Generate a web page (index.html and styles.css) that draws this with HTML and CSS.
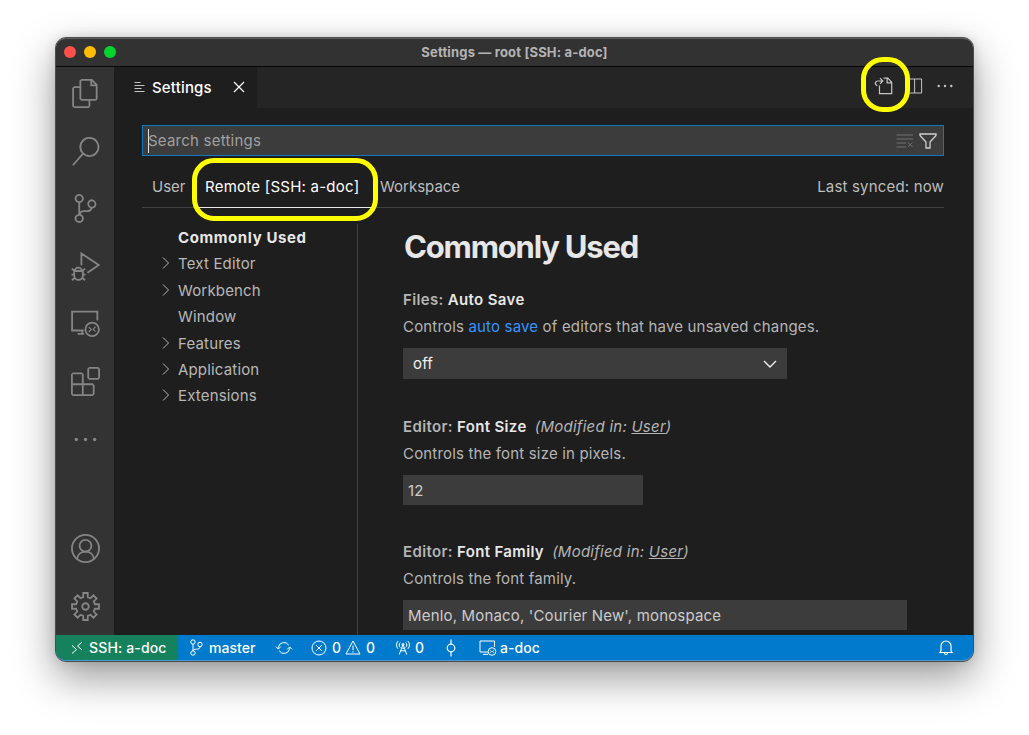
FILE: index.html
```
<!DOCTYPE html>
<html lang="en">
<head>
    <meta charset="UTF-8">
    <meta name="viewport" content="width=device-width, initial-scale=1.0">
    <title>Settings — root [SSH: a-doc]</title>
    <link rel="stylesheet" href="styles.css">
</head>
<body>
    <div class="window">
        <!-- Title bar -->
        <header class="titlebar">
            <div class="lights">
                <span class="light red"></span>
                <span class="light yellow"></span>
                <span class="light green"></span>
            </div>
            <span class="window-title">Settings — root [SSH: a-doc]</span>
        </header>

        <div class="main">
            <!-- Activity bar -->
            <nav class="activity">
                <svg viewBox="0 0 24 24" class="filled"><path d="M17.5 0h-9L7 1.5V6H2.5L1 7.5v15.07L2.5 24h12.07L16 22.57V18h4.7l1.3-1.43V4.5L17.5 0zm0 2.12l2.38 2.38H17.5V2.12zm-3 20.38h-12v-15H7v9.07L8.5 18h6v4.5zm6-6h-12v-15H16V6h4.5v10.5z"/></svg>
                <svg viewBox="0 0 24 24" class="filled"><path d="M15.25 0a8.25 8.25 0 0 0-6.18 13.72L1 22.88l1.12 1 8.05-9.12A8.251 8.251 0 1 0 15.25.01V0zm0 15a6.75 6.75 0 1 1 0-13.5 6.75 6.75 0 0 1 0 13.5z"/></svg>
                <svg viewBox="0 0 24 24" class="filled"><path d="M21.007 8.222A3.738 3.738 0 0 0 15.045 5.2a3.737 3.737 0 0 0 1.156 6.583 2.988 2.988 0 0 1-2.668 1.67h-2.99a4.456 4.456 0 0 0-2.989 1.165V7.4a3.737 3.737 0 1 0-1.494 0v9.117a3.776 3.776 0 1 0 1.816.099 2.99 2.99 0 0 1 2.668-1.667h2.99a4.484 4.484 0 0 0 4.223-3.039 3.736 3.736 0 0 0 3.25-3.687zM4.565 3.738a2.242 2.242 0 1 1 4.484 0 2.242 2.242 0 0 1-4.484 0zm4.484 16.441a2.242 2.242 0 1 1-4.484 0 2.242 2.242 0 0 1 4.484 0zm8.221-9.715a2.242 2.242 0 1 1 0-4.485 2.242 2.242 0 0 1 0 4.485z"/></svg>
                <svg viewBox="0 0 24 24"><path d="M8.6 11V1.2L23 10.8l-9.400 6.300M3.200 15.800a2.900 2.900 0 0 1 5.800 0M2.600 15.700h7.200v3.500a3.600 3.900 0 0 1-7.200 0zM.4 18.700h2.200M9.800 18.700H12M.8 13.700l2 2M11.600 13.700l-2 2M.8 23.400l2.200-2.100M11.600 23.400l-2.200-2.100"/></svg>
                <svg viewBox="0 0 24 24"><path d="M21.800 9.500V2.200H.9v15.600h9.600M5.500 20.600h5.400M9.300 17.800v2.800"/><circle cx="17.500" cy="16.900" r="5.600"/><path class="thin" d="M14.700 15l2 2-2 2M20.300 14.700l-2 2 2 2"/></svg>
                <svg viewBox="0 0 24 24" class="filled"><path d="M13.500 1.500L15 0h7.500L24 1.500V9l-1.500 1.500H15L13.500 9V1.500zm1.500 0V9h7.500V1.500H15zM0 15V6l1.500-1.500H9L10.500 6v7.500H18l1.500 1.500v7.500L18 24H1.500L0 22.500V15zm9-1.500V6H1.500v7.500H9zM9 15H1.500v7.500H9V15zm1.500 7.500H18V15h-7.500v7.500z"/></svg>
                <svg viewBox="0 0 24 24" class="filled"><circle cx="4.400" cy="12" r="1.400"/><circle cx="12" cy="12" r="1.400"/><circle cx="19.600" cy="12" r="1.400"/></svg>
                <svg viewBox="0 0 24 24" class="push"><circle cx="12" cy="12" r="11.200"/><circle cx="12" cy="9.700" r="4.900"/><path d="M5 20.500c.5-3.300 3-5.900 7-5.900s6.500 2.600 7 5.900"/></svg>
                <svg viewBox="-12 -12 24 24"><path d="M7.780-1.870 11.150-1.870 11.150 1.870 7.780 1.870 6.820 4.180 9.210 6.560 6.560 9.210 4.180 6.820 1.870 7.780 1.870 11.150-1.870 11.150-1.870 7.780-4.180 6.820-6.560 9.210-9.210 6.560-6.820 4.180-7.780 1.870-11.150 1.870-11.150-1.870-7.780-1.870-6.820-4.180-9.210-6.560-6.560-9.210-4.180-6.820-1.870-7.780-1.870-11.150 1.870-11.150 1.870-7.780 4.180-6.820 6.560-9.210 9.210-6.560 6.820-4.180Z"/><circle r="2.700"/></svg>
            </nav>

            <div class="editor">
                <!-- Tabs -->
                <div class="tabs">
                    <div class="tab">
                        <svg class="tab-icon" viewBox="0 0 12 12"><path d="M.5 1.500h6M.5 4.500h10M.5 7.500h7M.5 10.500h10"/></svg>
                        <span class="tab-name">Settings</span>
                        <svg class="tab-close" viewBox="0 0 12 12"><path d="M1 1l10 10M11 1L1 11"/></svg>
                    </div>
                    <div class="actions">
                        <div class="open-json">
                            <svg viewBox="0 0 20 20"><path d="M5.500 9.500v8.200h12.200V6.300L13.800 2.200H9.500M13.100 2.200v4.700h4.600M3.400 9.600C.2 8.300 1 5 4 5h4.400M6 2.200L8.800 5 6 7.800"/></svg>
                            <span class="mark mark-icon"></span>
                        </div>
                        <svg class="split" viewBox="0 0 16 16"><path d="M.6 1h14v14H.6zM7.600 1v14"/></svg>
                        <svg class="more" viewBox="0 0 16 4"><circle cx="1.700" cy="2" r="1.200"/><circle cx="8" cy="2" r="1.200"/><circle cx="14.300" cy="2" r="1.200"/></svg>
                    </div>
                </div>

                <div class="settings">
                    <!-- Search -->
                    <div class="search">
                        <span class="caret"></span>
                        <span class="placeholder">Search settings</span>
                        <svg class="clear" viewBox="0 0 18 14"><path d="M.5 1H17M.5 5H17M.5 9h9.500M.5 13h9.500M12 8.500l4.500 4.500M16.500 8.500L12 13"/></svg>
                        <svg class="filter" viewBox="0 0 18 16"><path d="M1 1h16v1.500L11 9v6H7V9L1 2.500z"/></svg>
                    </div>

                    <!-- Scopes -->
                    <div class="scopes">
                        <span class="scope user">User</span>
                        <span class="scope remote">Remote [SSH: a-doc]<span class="mark mark-scope"></span></span>
                        <span class="scope workspace">Workspace</span>
                        <span class="synced">Last synced: now</span>
                    </div>

                    <div class="body">
                        <!-- Table of contents -->
                        <ul class="toc">
                            <li class="selected">Commonly Used</li>
                            <li><svg viewBox="0 0 8 14"><path d="M1 1.500l5.500 5.500L1 12.500"/></svg>Text Editor</li>
                            <li><svg viewBox="0 0 8 14"><path d="M1 1.500l5.500 5.500L1 12.500"/></svg>Workbench</li>
                            <li>Window</li>
                            <li><svg viewBox="0 0 8 14"><path d="M1 1.500l5.500 5.500L1 12.500"/></svg>Features</li>
                            <li><svg viewBox="0 0 8 14"><path d="M1 1.500l5.500 5.500L1 12.500"/></svg>Application</li>
                            <li><svg viewBox="0 0 8 14"><path d="M1 1.500l5.500 5.500L1 12.500"/></svg>Extensions</li>
                        </ul>

                        <div class="list">
                            <h1>Commonly Used</h1>
                            <section class="setting">
                                <h2><span class="category">Files:</span> Auto Save</h2>
                                <p>Controls <a href="#">auto save</a> of editors that have unsaved changes.</p>
                                <div class="field select">off
                                    <svg viewBox="0 0 14 8"><path d="M1 1l6 6 6-6"/></svg>
                                </div>
                            </section>
                            <section class="setting">
                                <h2><span class="category">Editor:</span> Font Size <em>(Modified in: <u>User</u>)</em></h2>
                                <p>Controls the font size in pixels.</p>
                                <div class="field number">12</div>
                            </section>
                            <section class="setting">
                                <h2><span class="category">Editor:</span> Font Family <em>(Modified in: <u>User</u>)</em></h2>
                                <p>Controls the font family.</p>
                                <div class="field text">Menlo, Monaco, 'Courier New', monospace</div>
                            </section>
                        </div>
                    </div>
                </div>
            </div>
        </div>

        <!-- Status bar -->
        <footer class="status">
            <div class="item host">
                <svg class="i-remote" viewBox="0 0 12 14"><path d="M1 4.500l4.500 4L1 12.500M11 1L6.500 5 11 9"/></svg>
                <span>SSH: a-doc</span>
            </div>
            <div class="item branch">
                <svg class="i-branch" viewBox="0 0 13 17"><circle cx="3" cy="3" r="2.200"/><circle cx="3" cy="14" r="2.200"/><circle cx="10" cy="5.500" r="2.200"/><path d="M3 5.200v6.600M10 7.700c0 2-1.500 2.500-3.500 2.500-2 0-3.500.4-3.500 1.800"/></svg>
                <span>master</span>
            </div>
            <div class="item sync">
                <svg class="i-sync" viewBox="0 0 18 14"><path d="M3.300 7.500V6.600a5.700 5.700 0 0 1 10.500-2.400M14.700 6.500v.9a5.700 5.700 0 0 1-10.500 2.400M.8 5.600l2.500 2.500 2.500-2.500M12.200 8.400l2.500-2.500 2.500 2.500"/></svg>
            </div>
            <div class="item problems">
                <svg class="i-error" viewBox="0 0 16 16"><circle cx="8" cy="8" r="7"/><path d="M5.200 5.200l5.600 5.600M10.800 5.200l-5.600 5.600"/></svg>
                <span>0</span>
                <svg class="i-warning" viewBox="0 0 16 15"><path d="M8 1L15 14H1zM8 5.500v4.700M8 11.300v1.300"/></svg>
                <span>0</span>
            </div>
            <div class="item ports">
                <svg class="i-tower" viewBox="0 0 14 15"><path d="M3.200 14.500L7 4.500l3.800 10M4.700 10.800h4.600M5.700 8.200h2.600M4.300 7.500a3.300 3.300 0 0 1 0-5M9.700 7.500a3.300 3.300 0 0 0 0-5M2.100 8.800a5.500 5.500 0 0 1 0-7.700M11.900 8.800a5.500 5.500 0 0 0 0-7.700"/><circle cx="7" cy="4.500" r="1"/></svg>
                <span>0</span>
            </div>
            <div class="item commit">
                <svg class="i-commit" viewBox="0 0 10 18"><circle cx="5" cy="9" r="3.800"/><path d="M5 .5v4.700M5 12.800v4.700"/></svg>
            </div>
            <div class="item context">
                <svg class="i-screen" viewBox="0 0 18 16"><path d="M15.500 7V1H1v11h8M4 14.300h5"/><circle cx="13" cy="11.500" r="3.800"/><path d="M11.300 10.300l1.200 1.200-1.200 1.200M14.700 10.300l-1.200 1.200 1.200 1.200"/></svg>
                <span>a-doc</span>
            </div>
            <div class="item bell">
                <svg class="i-bell" viewBox="0 0 14 16"><path d="M1 12.500h12l-1-2V6a5 5 0 0 0-10 0v4.500zM5.500 13a1.500 1.500 0 0 0 3 0"/></svg>
            </div>
        </footer>
    </div>
</body>
</html>
```
FILE: styles.css
```
* {
    box-sizing: border-box;
}

body {
    margin: 0;
    height: 735px;
    padding: 37px 55px 0;
    overflow: hidden;
    background: #fff;
    font-family: Inter, "Liberation Sans", sans-serif;
    font-size: 15px;
    letter-spacing: 0.17px;
    color: #cccccc;
}

svg {
    display: block;
    flex: none;
    fill: none;
    stroke: currentColor;
}

/* Window */
.window {
    width: 919px;
    height: 625px;
    border: 1px solid #4c4c4c;
    border-radius: 11px;
    display: flex;
    flex-direction: column;
    background: #1e1e1e;
    background-clip: padding-box;
    box-shadow: 0 16px 42px rgba(0, 0, 0, 0.4), 0 0 12px rgba(0, 0, 0, 0.12);
}

.titlebar {
    height: 29px;
    display: grid;
    grid-template-columns: 1fr auto 1fr;
    align-items: center;
    padding: 0 8px 2px;
    background: #323232;
    border-top: 1px solid #5c5c5c;
    border-bottom: 1px solid #060606;
    border-radius: 10px 10px 0 0;
}

.lights {
    display: flex;
    gap: 8px;
}

.light {
    width: 12px;
    height: 12px;
    border-radius: 50%;
}

.red {
    background: #ff5149;
}

.yellow {
    background: #ffbd05;
}

.green {
    background: #06d32d;
}

.window-title {
    font-size: 13px;
    font-weight: 700;
    color: #b4b4b4;
}

.main {
    flex: 1;
    min-height: 0;
    display: flex;
}

/* Activity bar */
.activity {
    width: 58px;
    padding: 12px 0 14px;
    display: flex;
    flex-direction: column;
    align-items: center;
    gap: 28.600px;
    background: #333333;
    color: #858585;
}

.activity svg {
    width: 29px;
    height: 29px;
    stroke-width: 1.500;
}

.activity .filled {
    fill: currentColor;
    stroke: none;
}

.activity .thin {
    stroke-width: 1;
}

.activity .push {
    margin-top: auto;
}

/* Tabs */
.editor {
    flex: 1;
    min-width: 0;
    display: flex;
    flex-direction: column;
}

.tabs {
    height: 41px;
    display: flex;
    justify-content: space-between;
    background: #252526;
}

.tab {
    width: 143px;
    padding-left: 20px;
    display: flex;
    align-items: center;
    background: #1e1e1e;
    color: #fff;
}

.tab-icon {
    width: 12px;
    height: 12px;
    margin-bottom: 2px;
    color: #c5c5c5;
}

.tab-name {
    width: 81px;
    margin-left: 6px;
    font-weight: 500;
}

.tab-close {
    width: 12px;
    height: 12px;
    margin-bottom: 2px;
    stroke-width: 1.200;
}

.actions {
    display: flex;
    align-items: center;
    padding: 0 20px 3px 0;
    color: #c5c5c5;
}

.open-json {
    position: relative;
    margin-right: 13px;
}

.open-json svg {
    width: 20px;
    height: 20px;
    stroke-width: 1.200;
}

.split {
    width: 16px;
    height: 16px;
    margin-right: 14px;
}

.actions .more {
    width: 16px;
    height: 4px;
    fill: currentColor;
    stroke: none;
}

/* Yellow callouts */
.mark {
    position: absolute;
    border: 5px solid #ffff00;
}

.mark-icon {
    left: -13px;
    top: -19px;
    width: 49px;
    height: 55px;
    border-radius: 22px;
    z-index: 1;
}

.mark-scope {
    left: -6px;
    top: -8px;
    width: 186px;
    height: 63px;
    border-radius: 22px;
    z-index: 1;
}

/* Settings editor */
.settings {
    flex: 1;
    min-height: 0;
    padding: 17px 29px 0 28px;
    display: flex;
    flex-direction: column;
}

.search {
    height: 31px;
    flex: none;
    display: flex;
    align-items: center;
    padding: 0 6px 0 5px;
    border: 1px solid #0f78bf;
    background: #3c3c3c;
}

.caret {
    width: 1px;
    height: 24px;
    background: #e0e0e0;
}

.placeholder {
    flex: 1;
    margin-left: -1px;
    color: #a0a0a0;
    letter-spacing: 0.22px;
}

.clear {
    width: 18px;
    height: 14px;
    margin-right: 5px;
    color: #707070;
}

.filter {
    width: 18px;
    height: 16px;
    color: #d0d0d0;
    stroke-width: 1.300;
}

.scopes {
    height: 52px;
    flex: none;
    display: flex;
    align-items: flex-end;
    border-bottom: 1px solid #404040;
    color: #bdbdbd;
}

.scope {
    height: 41px;
    line-height: 42px;
    white-space: nowrap;
    letter-spacing: 0;
}

.user {
    width: 56px;
    padding-left: 10px;
}

.remote {
    position: relative;
    width: 173px;
    padding-left: 7px;
    color: #fff;
    letter-spacing: 0.24px;
    margin-bottom: -1px;
    height: 42px;
    border-bottom: 1px solid #e7e7e7;
}

.workspace {
    padding-left: 9px;
}

.synced {
    margin-left: auto;
    height: 41px;
    line-height: 42px;
}

.body {
    flex: 1;
    min-height: 0;
    display: flex;
    padding-top: 16px;
}

.toc {
    width: 216px;
    flex: none;
    margin: 0;
    padding: 0;
    list-style: none;
    border-right: 1px solid #404040;
    color: #b8b8b8;
}

.toc li {
    position: relative;
    height: 26.400px;
    line-height: 28px;
    padding-left: 36px;
}

.toc svg {
    position: absolute;
    left: 20px;
    top: 6px;
    width: 8px;
    height: 14px;
}

.toc .selected {
    line-height: 27px;
    font-weight: 700;
    letter-spacing: 0.6px;
    color: #e7e7e7;
}

.list {
    flex: 1;
    min-width: 0;
    padding-left: 45px;
    overflow: hidden;
}

h1 {
    margin: 0 0 22px;
    padding-left: 1px;
    font-size: 31px;
    line-height: 46px;
    font-weight: 700;
    letter-spacing: -1.200px;
    color: #e7e7e7;
}

.setting {
    height: 125px;
}

.setting:first-of-type {
    height: 127px;
}

h2 {
    margin: 0;
    height: 27px;
    font-size: 15px;
    line-height: 16px;
    font-weight: 600;
    letter-spacing: 0.35px;
    color: #e7e7e7;
    white-space: pre;
}

.category {
    color: #b5b5b5;
}

h2 em {
    margin-left: 4px;
    font-weight: 400;
    letter-spacing: 0.25px;
    color: #b5b5b5;
}

p {
    margin: 0 0 14px;
    line-height: 15px;
    color: #b5b5b5;
}

p a {
    color: #3794ff;
    text-decoration: none;
}

.field {
    height: 30px;
    padding: 0 5px;
    line-height: 31px;
    background: #3c3c3c;
    color: #cccccc;
}

.select {
    width: 384px;
    height: 31px;
    padding: 0 10px;
    display: flex;
    align-items: center;
    justify-content: space-between;
    color: #f0f0f0;
}

.select svg {
    width: 14px;
    height: 8px;
    stroke-width: 1.400;
}

.number {
    width: 240px;
}

.text {
    width: 504px;
}

/* Status bar */
.status {
    height: 26px;
    display: flex;
    background: #007acc;
    border-radius: 0 0 10px 10px;
    border-bottom: 1px solid #4a9bd0;
    overflow: hidden;
    color: #fff;
    font-size: 14px;
    font-weight: 500;
    letter-spacing: 0.05px;
}

.item {
    display: flex;
    align-items: center;
}

.host {
    width: 122px;
    padding-left: 15px;
    gap: 6px;
    background: #16825d;
    letter-spacing: 0.15px;
}

.i-remote {
    width: 12px;
    height: 14px;
}

.branch {
    width: 97px;
    padding-left: 12px;
    gap: 6px;
}

.i-branch {
    width: 13px;
    height: 17px;
}

.sync {
    width: 36px;
}

.i-sync {
    width: 18px;
    height: 14px;
}

.problems {
    width: 85px;
}

.problems span {
    width: 13px;
}

.i-error {
    width: 16px;
    height: 16px;
    margin-right: 5px;
}

.i-warning {
    width: 16px;
    height: 15px;
    margin-right: 5px;
}

.ports {
    width: 50px;
    gap: 5px;
}

.i-tower {
    width: 14px;
    height: 15px;
}

.commit {
    width: 33px;
}

.i-commit {
    width: 10px;
    height: 18px;
    stroke-width: 1.200;
}

.context {
    gap: 3px;
}

.i-screen {
    width: 18px;
    height: 16px;
}

.bell {
    margin-left: auto;
    padding-right: 20px;
}

.i-bell {
    width: 14px;
    height: 16px;
    stroke-width: 1.200;
}
```
